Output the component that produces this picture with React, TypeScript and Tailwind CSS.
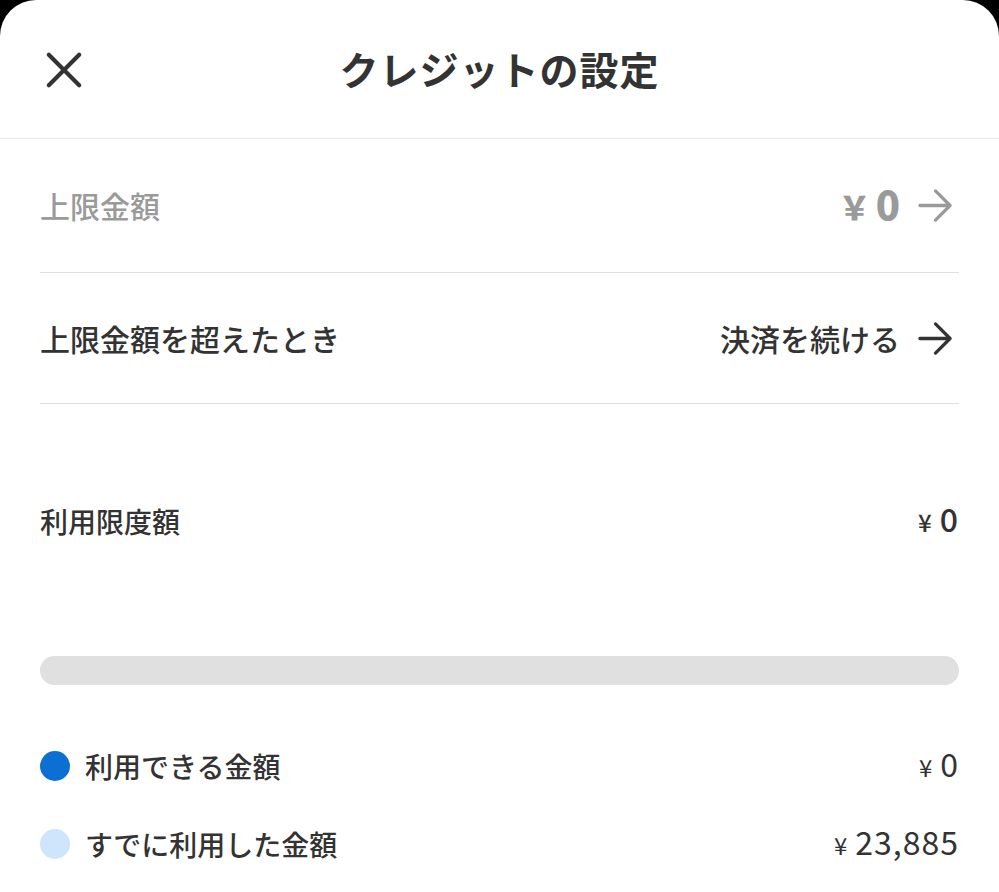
import React from "react";

const font = { fontFamily: '"Noto Sans CJK JP", "Noto Sans", sans-serif' };

function Arrow({ className }: { className?: string }) {
  return (
    <svg viewBox="0 0 36 36" className={className} fill="none" stroke="currentColor" strokeWidth="3.4" strokeLinecap="round" strokeLinejoin="round">
      <path d="M2 18h31M18 3l15 15-15 15" />
    </svg>
  );
}

function Yen({ value, size }: { value: string; size: "sm" | "lg" }) {
  if (size === "lg") {
    return (
      <span className="flex items-baseline">
        <span className="text-[32px] font-black mr-[5px]">￥</span>
        <span className="text-[40px] leading-none font-black">{value}</span>
      </span>
    );
  }
  return (
    <span className="flex items-baseline">
      <span className="text-[24px] mr-[8px]">¥</span>
      <span className="text-[32px] leading-none tracking-[1px]">{value}</span>
    </span>
  );
}

export default function App() {
  return (
    <div className="w-[999px] h-[892px] bg-black overflow-hidden" style={font}>
      <div className="bg-white rounded-t-[36px] h-full">
        <header className="relative h-[139px] flex items-center justify-center border-b border-[#e6e6e6]">
          <button className="absolute left-[44px] top-[51px] text-[#333]">
            <svg viewBox="0 0 40 40" className="w-[40px] h-[38px]" fill="none" stroke="currentColor" strokeWidth="4.4" strokeLinecap="round">
              <path d="M4 4l32 32M36 4L4 36" />
            </svg>
          </button>
          <h1 className="text-[39px] font-bold text-[#333] tracking-[1px] -mt-[2px]">クレジットの設定</h1>
        </header>

        <div className="px-[40px]">
          <div className="h-[134px] flex items-center justify-between border-b border-[#e0e0e0]">
            <span className="text-[30px] font-medium text-[#9a9a9a]">上限金額</span>
            <span className="flex items-center gap-[18px] text-[#9a9a9a] font-bold pr-[6px]">
              <Yen value="0" size="lg" />
              <Arrow className="w-[35px] h-[35px]" />
            </span>
          </div>
          <div className="h-[131px] flex items-center justify-between border-b border-[#e0e0e0]">
            <span className="text-[30px] font-medium text-[#333]">上限金額を超えたとき</span>
            <span className="flex items-center gap-[18px] text-[#333] pr-[6px]">
              <span className="text-[30px] font-medium">決済を続ける</span>
              <Arrow className="w-[35px] h-[35px]" />
            </span>
          </div>

          <div className="mt-[97px] h-[40px] flex items-center justify-between text-[#333]">
            <span className="text-[28px] font-medium">利用限度額</span>
            <span className="font-medium"><Yen value="0" size="sm" /></span>
          </div>

          <div className="mt-[115px] h-[29px] rounded-full bg-[#e0e0e0]" />

          <div className="mt-[61px] h-[40px] flex items-center justify-between text-[#333]">
            <span className="flex items-center gap-[15px]">
              <span className="w-[30px] h-[30px] rounded-full bg-[#0b6fd4]" />
              <span className="text-[28px] font-medium">利用できる金額</span>
            </span>
            <Yen value="0" size="sm" />
          </div>

          <div className="mt-[38px] h-[40px] flex items-center justify-between text-[#333]">
            <span className="flex items-center gap-[15px]">
              <span className="w-[30px] h-[30px] rounded-full bg-[#cfe5fb]" />
              <span className="text-[28px] font-medium">すでに利用した金額</span>
            </span>
            <Yen value="23,885" size="sm" />
          </div>
        </div>
      </div>
    </div>
  );
}
